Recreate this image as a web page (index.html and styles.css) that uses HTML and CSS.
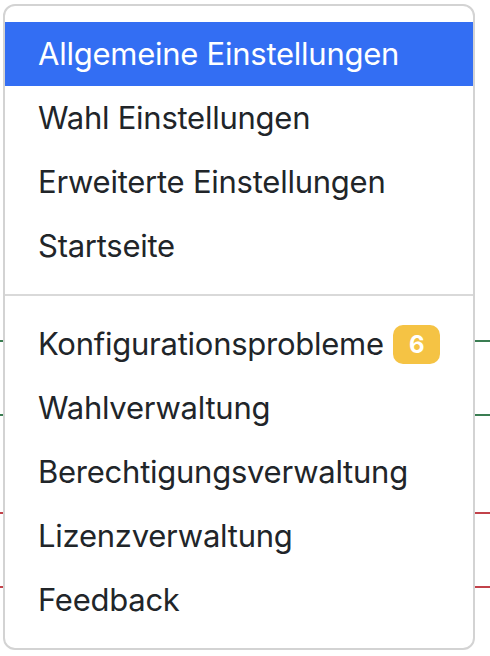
FILE: index.html
```html
<!DOCTYPE html>
<html lang="de">
<head>
<meta charset="utf-8">
<title>Menü</title>
<link rel="stylesheet" href="styles.css">
</head>
<body>
<div class="backdrop">
  <div class="gap g1"></div>
  <div class="line green"></div>
  <div class="gap g2"></div>
  <div class="line green"></div>
  <div class="gap g3"></div>
  <div class="line red"></div>
  <div class="gap g2"></div>
  <div class="line red"></div>
</div>
<nav class="menu">
  <a class="item active" href="#">Allgemeine Einstellungen</a>
  <a class="item" href="#">Wahl Einstellungen</a>
  <a class="item" href="#">Erweiterte Einstellungen</a>
  <a class="item" href="#">Startseite</a>
  <div class="divider"></div>
  <a class="item" href="#">Konfigurationsprobleme <span class="badge">6</span></a>
  <a class="item" href="#">Wahlverwaltung</a>
  <a class="item" href="#">Berechtigungsverwaltung</a>
  <a class="item" href="#">Lizenzverwaltung</a>
  <a class="item" href="#">Feedback</a>
</nav>
</body>
</html>
```
FILE: styles.css
```css
html, body {
  margin: 0;
  padding: 0;
  background: #ffffff;
}
body {
  position: relative;
  width: 490px;
  height: 656px;
  overflow: hidden;
  font-family: Inter, "Noto Sans", "Liberation Sans", sans-serif;
}
.backdrop {
  display: flex;
  flex-direction: column;
}
.gap.g1 { height: 340px; }
.gap.g2 { height: 72px; }
.gap.g3 { height: 96px; }
.line { height: 2px; }
.line.green { background: #3a7d52; }
.line.red { background: #c2424a; }

.menu {
  position: absolute;
  left: 3px;
  top: 4px;
  width: 472px;
  height: 646px;
  box-sizing: border-box;
  padding: 16px 0;
  border: 2px solid #d3d3d3;
  border-radius: 12px;
  background: #ffffff;
  display: flex;
  flex-direction: column;
}
.item {
  display: block;
  padding: 8px 32px 8px 33px;
  font-size: 31px;
  letter-spacing: -0.25px;
  line-height: 48px;
  color: #212529;
  text-decoration: none;
  white-space: nowrap;
}
.item.active {
  background: #336ef3;
  color: #ffffff;
}
.divider {
  margin: 16px 0;
  border-top: 2px solid #d9d9d9;
}
.badge {
  display: inline-block;
  vertical-align: 2px;
  width: 47px;
  height: 39px;
  line-height: 39px;
  text-align: center;
  font-size: 24px;
  font-weight: 700;
  letter-spacing: 0;
  color: #ffffff;
  background: #f5c344;
  border-radius: 10px;
  margin-left: 1px;
}
```
